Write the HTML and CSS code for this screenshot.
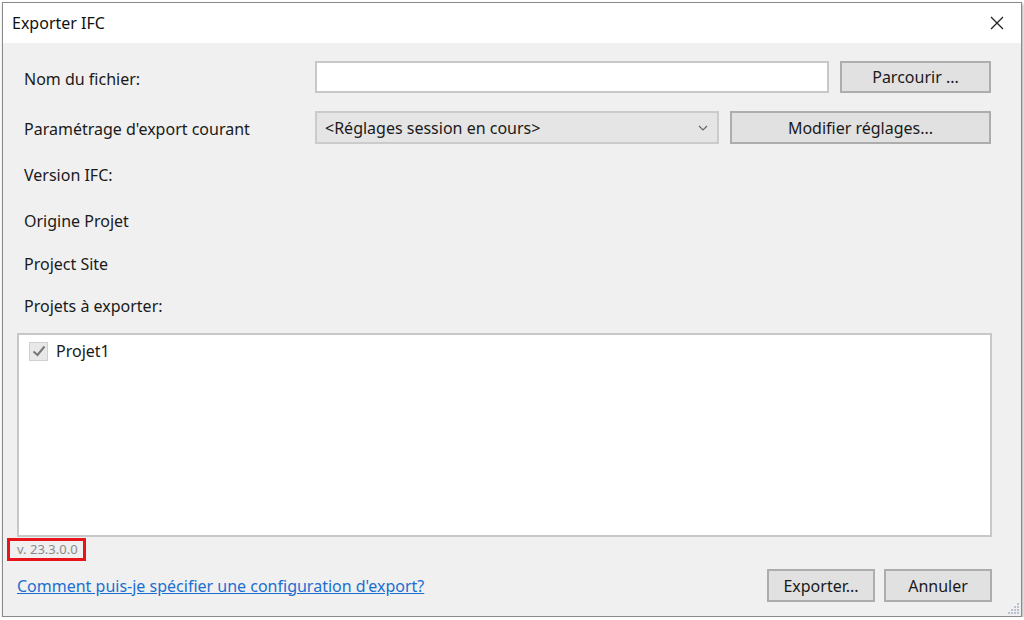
FILE: index.html
```html
<!DOCTYPE html>
<html lang="fr">
<head>
  <meta charset="UTF-8">
  <title>Exporter IFC</title>
  <link rel="stylesheet" href="styles.css">
</head>
<body>
<div class="window">
  <div class="titlebar">
    <span class="title">Exporter IFC</span>
    <svg class="close" width="14" height="14" viewBox="0 0 14 14">
      <path d="M1 1 L13 13 M13 1 L1 13" stroke="#222" stroke-width="1.3" fill="none"/>
    </svg>
  </div>

  <div class="content">
    <div class="row row-file">
      <div class="label">Nom du fichier:</div>
      <div class="textbox"></div>
      <button class="btn btn-browse">Parcourir ...</button>
    </div>

    <div class="row row-setup">
      <div class="label">Paramétrage d'export courant</div>
      <div class="combo">
        <span>&lt;Réglages session en cours&gt;</span>
        <svg width="10" height="6" viewBox="0 0 10 6">
          <path d="M1 1 L5 5 L9 1" stroke="#666" stroke-width="1.2" fill="none"/>
        </svg>
      </div>
      <button class="btn btn-modify">Modifier réglages...</button>
    </div>

    <div class="label line line-version">Version IFC:</div>
    <div class="label line line-origin">Origine Projet</div>
    <div class="label line line-site">Project Site</div>
    <div class="label line line-projects">Projets à exporter:</div>

    <div class="listbox">
      <div class="item">
        <span class="check">
          <svg width="14" height="12" viewBox="0 0 14 12">
            <path d="M1.5 6.5 L5.5 10 L12.5 1.5" stroke="#777" stroke-width="2" fill="none"/>
          </svg>
        </span>
        <span>Projet1</span>
      </div>
    </div>

    <div class="version"><span class="version-box">v. 23.3.0.0</span></div>

    <div class="footer">
      <a class="help" href="#">Comment puis-je spécifier une configuration d'export?</a>
      <div class="actions">
        <button class="btn btn-small">Exporter...</button>
        <button class="btn btn-small">Annuler</button>
      </div>
    </div>

    <svg class="grip" width="14" height="14" viewBox="0 0 14 14">
      <g fill="#b8c2d0">
        <rect x="11" y="2" width="2" height="2"/>
        <rect x="8" y="5" width="2" height="2"/><rect x="11" y="5" width="2" height="2"/>
        <rect x="5" y="8" width="2" height="2"/><rect x="8" y="8" width="2" height="2"/><rect x="11" y="8" width="2" height="2"/>
        <rect x="2" y="11" width="2" height="2"/><rect x="5" y="11" width="2" height="2"/><rect x="8" y="11" width="2" height="2"/><rect x="11" y="11" width="2" height="2"/>
      </g>
    </svg>
  </div>
</div>
</body>
</html>
```

FILE: styles.css
```css
* { box-sizing: border-box; }

body {
  margin: 0;
  background: #fff;
  font-family: "Noto Sans", "Open Sans", sans-serif;
  font-size: 16px;
  color: #1a1a1a;
}

.window {
  margin: 2px 0 0 2px;
  width: 1020px;
  height: 615px;
  border: 1px solid #8a8a8a;
  background: #f0f0f0;
  box-shadow: 1px 2px 3px rgba(0, 0, 0, 0.35);
  display: flex;
  flex-direction: column;
}

.titlebar {
  height: 40px;
  background: #fff;
  display: flex;
  align-items: center;
  justify-content: space-between;
  padding: 0 17px 0 9px;
}

.title {
  font-size: 16px;
  color: #111;
}

.content {
  position: relative;
  flex: 1;
  padding: 0 29px 0 14px;
  display: flex;
  flex-direction: column;
}

.label {
  padding-left: 7px;
}

.row {
  display: flex;
  align-items: center;
  gap: 11px;
}

.row .label {
  width: 298px;
  margin-right: -11px;
  padding-top: 3px;
}

.row-file {
  margin-top: 18px;
  height: 32px;
}

.row-setup {
  margin-top: 18px;
  height: 33px;
}

.textbox {
  width: 514px;
  height: 32px;
  background: #fff;
  border: 2px solid #c8c8c8;
}

.btn {
  font: inherit;
  color: #1a1a1a;
  background: #e1e1e1;
  border: 2px solid #adadad;
  height: 100%;
  padding: 0;
  cursor: default;
}

.btn-browse { width: 151px; }
.btn-modify { width: 261px; }

.combo {
  width: 404px;
  height: 33px;
  background: #e5e5e5;
  border: 2px solid #cbcbcb;
  display: flex;
  align-items: center;
  justify-content: space-between;
  padding: 0 9px 0 8px;
}

.line {
  height: 22px;
  line-height: 22px;
}

.line-version { margin-top: 20px; }
.line-origin { margin-top: 24px; }
.line-site { margin-top: 21px; }
.line-projects { margin-top: 20px; }

.listbox {
  margin-top: 16px;
  height: 204px;
  background: #fff;
  border: 2px solid #c8c8c8;
  padding: 6px 10px;
}

.item {
  display: flex;
  align-items: center;
  gap: 8px;
  height: 20px;
}

.check {
  width: 19px;
  height: 19px;
  border: 1px solid #cfcfcf;
  background: #e8e8e8;
  display: flex;
  align-items: center;
  justify-content: center;
}

.version {
  height: 22px;
  margin-left: -10px;
}

.version-box {
  display: inline-block;
  border: 3px solid #e8141b;
  padding: 0 5px 0 7px;
  line-height: 17px;
  font-size: 13px;
  color: #8a8a8a;
}

.footer {
  margin-top: 10px;
  height: 33px;
  display: flex;
  align-items: center;
  justify-content: space-between;
}

.help {
  color: #1a6fd0;
  text-decoration: underline;
}

.actions {
  display: flex;
  gap: 9px;
  height: 100%;
}

.btn-small { width: 108px; }

.grip {
  position: absolute;
  right: 1px;
  bottom: 1px;
}
```
